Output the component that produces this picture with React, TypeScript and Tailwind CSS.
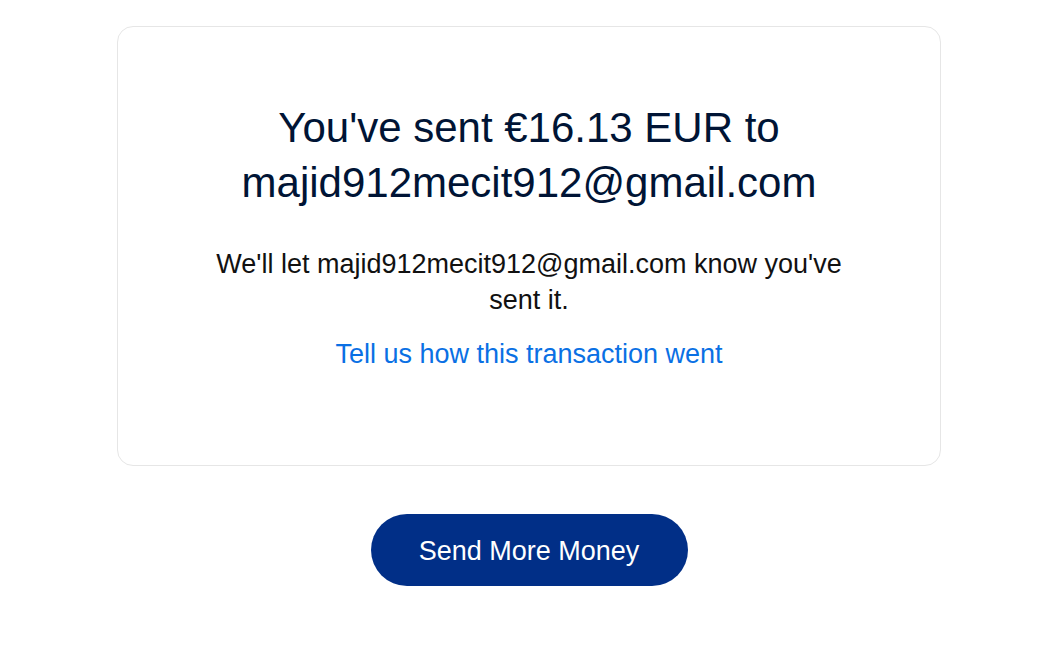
export default function App() {
  return (
    <div
      className="min-h-screen bg-white flex flex-col items-center pl-[15px]"
      style={{ fontFamily: '"Liberation Sans", Arial, sans-serif' }}
    >
      <div className="mt-[26px] w-[824px] h-[440px] rounded-[16px] border border-[#e6e6e6] flex flex-col items-center pt-[74px] text-center">
        <h1 className="text-[42px] leading-[1.3] text-[#001435] font-normal w-[620px]">
          You've sent €16.13 EUR to majid912mecit912@gmail.com
        </h1>
        <p className="mt-[36px] text-[27px] leading-[36px] text-[#111] w-[640px]">
          We'll let majid912mecit912@gmail.com know you've sent it.
        </p>
        <a className="mt-[18px] text-[27px] leading-[36px] text-[#0a70e4]" href="#">
          Tell us how this transaction went
        </a>
      </div>
      <button className="mt-[48px] w-[317px] h-[72px] rounded-full bg-[#012f87] text-white text-[27px] pt-[3px]">
        Send More Money
      </button>
    </div>
  );
}
